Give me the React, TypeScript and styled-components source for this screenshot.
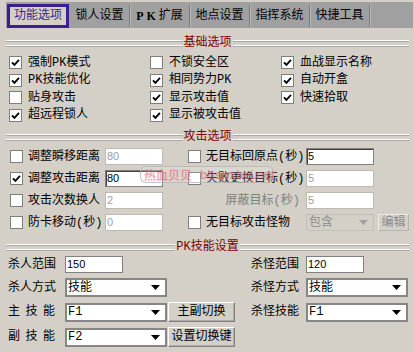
import styled, { createGlobalStyle, css } from 'styled-components';

const UI_FONT = '"Liberation Mono", "Noto Sans CJK SC", monospace';
const FIELD_FONT = '"Liberation Sans", Arial, sans-serif';

const GlobalStyle = createGlobalStyle`
  html, body {
    margin: 0;
    padding: 0;
    background: #d4d0c8;
  }
  * {
    box-sizing: border-box;
  }
`;

type CheckEntry = { label: string; checked: boolean } | null;

const basicOptions: CheckEntry[] = [
  { label: '强制PK模式', checked: true },
  { label: '不锁安全区', checked: false },
  { label: '血战显示名称', checked: true },
  { label: 'PK技能优化', checked: true },
  { label: '相同势力PK', checked: true },
  { label: '自动开盒', checked: true },
  { label: '贴身攻击', checked: false },
  { label: '显示攻击值', checked: true },
  { label: '快速拾取', checked: true },
  { label: '超远程锁人', checked: true },
  { label: '显示被攻击值', checked: true },
  null,
];

function CheckMark() {
  return (
    <svg width="9" height="9" viewBox="0 0 9 9">
      <path d="M1 4.3 L3.4 6.9 L8 1.8" fill="none" stroke="#000" strokeWidth="1.8" />
    </svg>
  );
}

function Arrow({ color }: { color: string }) {
  return (
    <svg width="9" height="5" viewBox="0 0 9 5">
      <path d="M0 0H9L4.5 5Z" fill={color} />
    </svg>
  );
}

function Check({ checked }: { checked?: boolean }) {
  return <Box>{checked && <CheckMark />}</Box>;
}

function Select({ value, w, h = 19, disabled }: { value: string; w: number; h?: number; disabled?: boolean }) {
  return (
    <DropDown $w={w} $h={h} $disabled={disabled}>
      <span>{value}</span>
      <Arrow color={disabled ? '#a0a0a0' : '#000'} />
    </DropDown>
  );
}

function Section({ title, gap }: { title: string; gap: number }) {
  return (
    <SectionHeader $gap={gap}>
      <Rule />
      <Title>{title}</Title>
      <Rule />
    </SectionHeader>
  );
}

export default function App() {
  return (
    <Window>
      <GlobalStyle />
      <TabBar>
        <Tab $active>功能选项</Tab>
        <Tab $first>锁人设置</Tab>
        <Tab>
          <Latin>PK</Latin>扩展
        </Tab>
        <Tab>地点设置</Tab>
        <Tab>指挥系统</Tab>
        <Tab>快捷工具</Tab>
      </TabBar>

      <Section title="基础选项" gap={9} />
      <CheckGrid>
        {basicOptions.map((opt, i) =>
          opt ? (
            <CheckItem key={i}>
              <Check checked={opt.checked} />
              <span>{opt.label}</span>
            </CheckItem>
          ) : (
            <span key={i} />
          ),
        )}
      </CheckGrid>

      <Section title="攻击选项" gap={7} />
      <AttackGrid>
        <Cell>
          <Check />
          <FieldLabel $w={77} $indent={5}>调整瞬移距离</FieldLabel>
          <TextField $w={58} $dim defaultValue="80" readOnly />
        </Cell>
        <Cell>
          <Check />
          <FieldLabel $w={100} $indent={5}>无目标回原点(秒)</FieldLabel>
          <TextField $w={68} $sunken defaultValue="5" readOnly />
        </Cell>

        <Cell>
          <Check checked />
          <FieldLabel $w={77} $indent={5}>调整攻击距离</FieldLabel>
          <TextField $w={58} $sunken defaultValue="80" readOnly />
        </Cell>
        <Cell>
          <Check />
          <FieldLabel $w={100} $indent={5}>失败更换目标(秒)</FieldLabel>
          <TextField $w={68} $dim defaultValue="5" readOnly />
        </Cell>

        <Cell>
          <Check />
          <FieldLabel $w={77} $indent={5}>攻击次数换人</FieldLabel>
          <TextField $w={58} $dim defaultValue="2" readOnly />
        </Cell>
        <Cell>
          <FieldLabel $w={118} $align="right" $dim $pad={6}>屏蔽目标(秒)</FieldLabel>
          <TextField $w={68} $dim defaultValue="5" readOnly />
        </Cell>

        <Cell>
          <Check />
          <FieldLabel $w={77} $indent={5}>防卡移动(秒)</FieldLabel>
          <TextField $w={58} $dim defaultValue="0" readOnly />
        </Cell>
        <Cell>
          <Check />
          <FieldLabel $w={100} $indent={5}>无目标攻击怪物</FieldLabel>
          <Select value="包含" w={68} h={17} disabled />
          <Button $w={31} $h={17} $disabled>编辑</Button>
        </Cell>
      </AttackGrid>

      <Section title="PK技能设置" gap={10} />
      <SkillGrid>
        <Cell>
          <FieldLabel $w={49}>杀人范围</FieldLabel>
          <TextField $w={58} $h={17} $gapLeft={8} defaultValue="150" readOnly />
        </Cell>
        <Cell>
          <FieldLabel $w={57} $align="right">杀怪范围</FieldLabel>
          <TextField $w={58} $h={17} $gapLeft={7} defaultValue="120" readOnly />
        </Cell>

        <Cell>
          <FieldLabel $w={49}>杀人方式</FieldLabel>
          <Spacer $w={8} />
          <Select value="技能" w={102} />
        </Cell>
        <Cell>
          <FieldLabel $w={57} $align="right">杀怪方式</FieldLabel>
          <Spacer $w={7} />
          <Select value="技能" w={102} />
        </Cell>

        <Cell>
          <FieldLabel $w={49}>主 技 能</FieldLabel>
          <Spacer $w={8} />
          <Select value="F1" w={102} />
          <Button $w={67} $h={20}>主副切换</Button>
        </Cell>
        <Cell>
          <FieldLabel $w={57} $align="right">杀怪技能</FieldLabel>
          <Spacer $w={7} />
          <Select value="F1" w={102} />
        </Cell>

        <Cell>
          <FieldLabel $w={49}>副 技 能</FieldLabel>
          <Spacer $w={8} />
          <Select value="F2" w={102} />
          <Button $w={67} $h={20}>设置切换键</Button>
        </Cell>
        <Cell />
      </SkillGrid>

      <Watermark>
        <span>热血贝贝</span>
        <WatermarkUrl>bbs.rxbei.net</WatermarkUrl>
      </Watermark>
    </Window>
  );
}

const Window = styled.div`
  position: relative;
  width: 414px;
  height: 352px;
  padding-top: 2px;
  overflow: hidden;
  background: #d4d0c8;
  font-family: ${UI_FONT};
  font-size: 12px;
  line-height: 14px;
  color: #000;
`;

const TabBar = styled.div`
  display: flex;
  align-items: flex-start;
  height: 26px;
  margin: 0 1px 0 6px;
  padding: 2px 0 0 1px;
  background: #a0a0a0;
`;

const Tab = styled.div<{ $active?: boolean; $first?: boolean }>`
  display: flex;
  align-items: center;
  justify-content: center;
  white-space: nowrap;
  ${({ $active, $first }) =>
    $active
      ? css`
          width: 62px;
          height: 24px;
          border: 3px solid #3b1f8e;
          background: #d4d0c8;
          color: #3b1f8e;
        `
      : css`
          width: 60px;
          height: 22px;
          margin-top: 1px;
          margin-left: ${$first ? 1 : 0}px;
          border-right: 1px solid #7a7a7a;
          box-shadow: 1px 0 0 #b8b8b8;
          color: #000;
        `}
`;

const Latin = styled.span`
  font-family: "Liberation Serif", serif;
  font-weight: bold;
  letter-spacing: 3px;
`;

const SectionHeader = styled.div<{ $gap: number }>`
  display: flex;
  align-items: center;
  height: 12px;
  margin: ${(p) => p.$gap}px 5px 0 6px;
  color: #800000;
  white-space: nowrap;
`;

const Rule = styled.div`
  flex: 1;
  height: 7px;
  background: linear-gradient(
    #ffffff 0 1px,
    #a8a8a8 1px 2px,
    transparent 2px 5px,
    #ffffff 5px 6px,
    #a8a8a8 6px 7px
  );
`;

const Title = styled.span`
  margin: 0 1px;
`;

const CheckGrid = styled.div`
  display: grid;
  grid-template-columns: 141px 131px 1fr;
  grid-auto-rows: 17.5px;
  margin-top: 5px;
  padding-left: 9px;
`;

const CheckItem = styled.label`
  display: flex;
  align-items: center;
  gap: 6px;
  white-space: nowrap;
`;

const Box = styled.span`
  flex: none;
  display: flex;
  align-items: center;
  justify-content: center;
  width: 13px;
  height: 13px;
  background: #fff;
  border: 1px solid #7e7e7e;
`;

const AttackGrid = styled.div`
  display: grid;
  grid-template-columns: 178px 1fr;
  grid-template-rows: repeat(4, 17px);
  row-gap: 5px;
  margin-top: 5px;
  padding-left: 10px;
`;

const SkillGrid = styled.div`
  display: grid;
  grid-template-columns: 234px 1fr;
  grid-template-rows: 17px 19px 20px 20px;
  row-gap: 5px;
  margin-top: 3px;
  padding-left: 8px;
`;

const Cell = styled.div`
  display: flex;
  align-items: center;
`;

const Spacer = styled.span<{ $w: number }>`
  flex: none;
  width: ${(p) => p.$w}px;
`;

const FieldLabel = styled.span<{
  $w: number;
  $align?: 'left' | 'right';
  $dim?: boolean;
  $indent?: number;
  $pad?: number;
}>`
  flex: none;
  width: ${(p) => p.$w}px;
  margin-left: ${(p) => p.$indent ?? 0}px;
  padding-right: ${(p) => p.$pad ?? 0}px;
  color: ${(p) => (p.$dim ? '#808080' : '#000')};
  text-align: ${(p) => p.$align ?? 'left'};
  white-space: pre;
  word-spacing: -1.7px;
`;

const TextField = styled.input<{ $w: number; $h?: number; $dim?: boolean; $sunken?: boolean; $gapLeft?: number }>`
  flex: none;
  width: ${(p) => p.$w}px;
  height: ${(p) => p.$h ?? 17}px;
  margin: 0 0 0 ${(p) => p.$gapLeft ?? 0}px;
  padding: 0 0 2px 1px;
  font-family: ${FIELD_FONT};
  font-size: 11px;
  color: ${(p) => (p.$dim ? '#a0a0a0' : '#000')};
  background: #fff;
  outline: none;
  border: 1px solid ${(p) => (p.$dim ? '#bdbab4' : '#808080')};
  ${(p) =>
    p.$sunken &&
    css`
      box-shadow: inset 1px 1px 0 #404040;
    `}
`;

const DropDown = styled.div<{ $w: number; $h: number; $disabled?: boolean }>`
  flex: none;
  display: flex;
  align-items: center;
  justify-content: space-between;
  width: ${(p) => p.$w}px;
  height: ${(p) => p.$h}px;
  padding: 0 5px 0 1px;
  white-space: nowrap;
  ${(p) =>
    p.$disabled
      ? css`
          padding-left: 2px;
          background: #d4d0c8;
          border: 1px solid #c4c0b8;
          color: #8c8c8c;
        `
      : css`
          background: #fff;
          border: 2px solid #868686;
          color: #000;
        `}
`;

const Button = styled.button<{ $w: number; $h: number; $disabled?: boolean }>`
  flex: none;
  display: flex;
  align-items: center;
  justify-content: center;
  width: ${(p) => p.$w}px;
  height: ${(p) => p.$h}px;
  margin: 0 0 0 ${(p) => (p.$disabled ? 4 : 1)}px;
  padding: 0;
  font-family: ${UI_FONT};
  font-size: 12px;
  line-height: 14px;
  white-space: nowrap;
  background: #d4d0c8;
  border: 1px solid;
  ${(p) =>
    p.$disabled
      ? css`
          border-color: #ecebe8 #b8b4ac #b8b4ac #ecebe8;
          color: #8c8c8c;
        `
      : css`
          border-color: #ffffff #808080 #808080 #ffffff;
          box-shadow: inset -1px -1px 0 #b0ada6;
          color: #000;
        `}
`;

const Watermark = styled.div`
  position: absolute;
  left: 140px;
  top: 166px;
  display: flex;
  align-items: center;
  gap: 8px;
  width: 134px;
  height: 17px;
  padding-left: 3px;
  border: 1px solid rgba(180, 180, 180, 0.8);
  border-radius: 6px;
  background: rgba(255, 255, 255, 0.15);
  color: rgba(228, 92, 112, 0.55);
  font-family: "Noto Sans CJK SC", sans-serif;
  font-size: 12px;
  font-weight: bold;
  pointer-events: none;
  white-space: nowrap;
`;

const WatermarkUrl = styled.span`
  font-family: "Liberation Sans", Arial, sans-serif;
  font-size: 12px;
`;
